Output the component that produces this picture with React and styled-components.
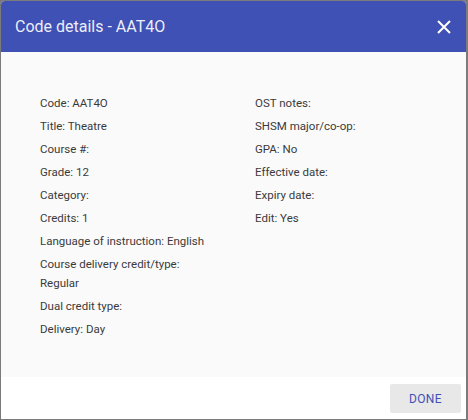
import React from 'react';
import styled, { createGlobalStyle } from 'styled-components';

const Global = createGlobalStyle`
  html, body {
    margin: 0;
    padding: 0;
    background: #7b7b7b;
  }
  body {
    font-family: Roboto, "Liberation Sans", sans-serif;
  }
`;

const Backdrop = styled.div`
  width: 468px;
  height: 420px;
  padding: 1px 2px 1px 1px;
  box-sizing: border-box;
`;

const Dialog = styled.div`
  display: flex;
  flex-direction: column;
  height: 100%;
  background: #fff;
  border-radius: 4px 4px 0 0;
  overflow: hidden;
`;

const Header = styled.div`
  height: 51px;
  background: #3f51b5;
  display: flex;
  align-items: center;
  justify-content: space-between;
  padding: 0 14px 0 14px;
  flex-shrink: 0;
`;

const Title = styled.h2`
  margin: 0;
  font-size: 16px;
  font-weight: 400;
  color: rgba(255, 255, 255, 0.92);
`;

const CloseButton = styled.button`
  border: 0;
  background: none;
  padding: 0;
  width: 16px;
  height: 16px;
  display: flex;
  align-items: center;
  justify-content: center;
  cursor: pointer;
`;

const Body = styled.div`
  flex: 1;
  background: #fafafa;
  padding: 42px 20px 0 39px;
  display: grid;
  grid-template-columns: 168px 1fr;
  column-gap: 47px;
  align-content: start;
`;

const Column = styled.div`
  display: flex;
  flex-direction: column;
  gap: 4px;
`;

const Field = styled.div`
  font-size: 11.5px;
  line-height: 19px;
  color: #3a3a3a;
`;

const Footer = styled.div`
  height: 42px;
  display: flex;
  justify-content: flex-end;
  align-items: center;
  padding: 0 5px;
  flex-shrink: 0;
`;

const DoneButton = styled.button`
  width: 71px;
  height: 29px;
  border: 0;
  border-radius: 2px;
  background: #e8e8e8;
  color: #3f51b5;
  font-family: Roboto, "Liberation Sans", sans-serif;
  font-size: 12px;
  letter-spacing: 0.4px;
  text-transform: uppercase;
  margin-top: 1px;
`;

const left = [
  'Code: AAT4O',
  'Title: Theatre',
  'Course #:',
  'Grade: 12',
  'Category:',
  'Credits: 1',
  'Language of instruction: English',
  'Course delivery credit/type: Regular',
  'Dual credit type:',
  'Delivery: Day',
];

const right = [
  'OST notes:',
  'SHSM major/co-op:',
  'GPA: No',
  'Effective date:',
  'Expiry date:',
  'Edit: Yes',
];

export default function App() {
  return (
    <Backdrop>
      <Global />
      <Dialog>
        <Header>
          <Title>Code details - AAT4O</Title>
          <CloseButton aria-label="close">
            <svg width="14" height="14" viewBox="0 0 14 14">
              <path d="M1 1L13 13M13 1L1 13" stroke="#fff" strokeWidth="2" />
            </svg>
          </CloseButton>
        </Header>
        <Body>
          <Column>
            {left.map((t) => (
              <Field key={t}>{t}</Field>
            ))}
          </Column>
          <Column>
            {right.map((t) => (
              <Field key={t}>{t}</Field>
            ))}
          </Column>
        </Body>
        <Footer>
          <DoneButton>Done</DoneButton>
        </Footer>
      </Dialog>
    </Backdrop>
  );
}
